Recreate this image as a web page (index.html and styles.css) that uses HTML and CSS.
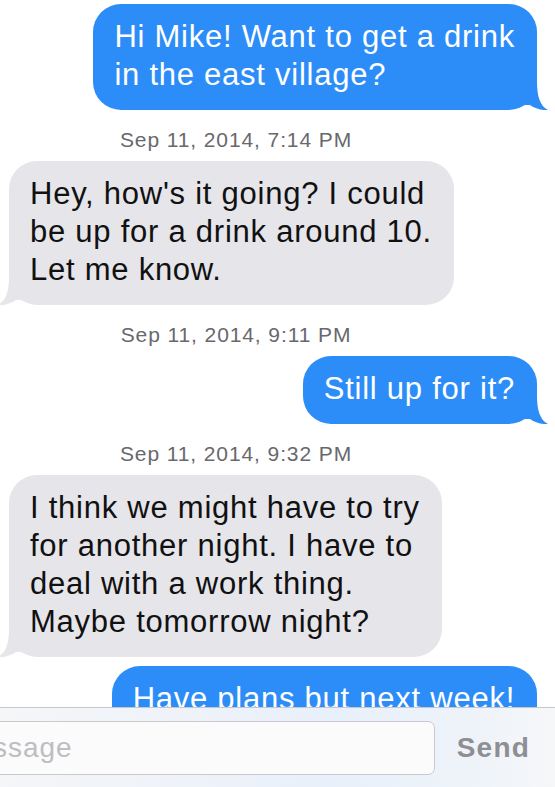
FILE: index.html
```html
<!DOCTYPE html>
<html lang="en">
<head>
<meta charset="utf-8">
<title>Messages</title>
<link rel="stylesheet" href="styles.css">
</head>
<body>
<div class="screen">
  <div class="thread">
    <div class="msg out">
      <p>Hi Mike! Want to get a drink<br>in the east village?</p>
      <svg class="tail" viewBox="0 0 31 28"><path d="M20 0 C20 14 23 24 31 28 C25 28.6 18 26.6 13 23 L0 23 L0 0 Z"/></svg>
    </div>
    <div class="stamp">Sep 11, 2014, 7:14 PM</div>
    <div class="msg in">
      <p>Hey, how's it going? I could<br>be up for a drink around 10.<br>Let me know.</p>
      <svg class="tail" viewBox="0 0 31 28"><path d="M20 0 C20 14 23 24 31 28 C25 28.6 18 26.6 13 23 L0 23 L0 0 Z"/></svg>
    </div>
    <div class="stamp">Sep 11, 2014, 9:11 PM</div>
    <div class="msg out">
      <p>Still up for it?</p>
      <svg class="tail" viewBox="0 0 31 28"><path d="M20 0 C20 14 23 24 31 28 C25 28.6 18 26.6 13 23 L0 23 L0 0 Z"/></svg>
    </div>
    <div class="stamp">Sep 11, 2014, 9:32 PM</div>
    <div class="msg in">
      <p>I think we might have to try<br>for another night. I have to<br>deal with a work thing.<br>Maybe tomorrow night?</p>
      <svg class="tail" viewBox="0 0 31 28"><path d="M20 0 C20 14 23 24 31 28 C25 28.6 18 26.6 13 23 L0 23 L0 0 Z"/></svg>
    </div>
    <div class="msg out">
      <p>Have plans but next week!</p>
    </div>
  </div>
  <div class="composer">
    <div class="field"><span class="placeholder">Message</span></div>
    <span class="send">Send</span>
  </div>
</div>
</body>
</html>
```
FILE: styles.css
```css
* { box-sizing: border-box; }
html, body { margin: 0; padding: 0; }
body {
  width: 555px;
  height: 787px;
  overflow: hidden;
  background: #ffffff;
  font-family: "Liberation Sans", Arial, sans-serif;
}
.screen {
  display: flex;
  flex-direction: column;
  height: 787px;
}
.thread {
  flex: 1;
  min-height: 0;
  overflow: hidden;
  display: flex;
  flex-direction: column;
  gap: 9px;
  padding: 4px 18px 0 9px;
}
.thread > * { flex-shrink: 0; }
.msg {
  position: relative;
  padding: 14px 22px 16px 21px;
  border-radius: 28px;
  font-size: 31px;
  line-height: 38px;
  letter-spacing: 0.75px;
  white-space: nowrap;
}
.msg p { margin: 0; }
.msg.out {
  align-self: flex-end;
  background: #2d8df8;
  color: #ffffff;
}
.msg.in {
  align-self: flex-start;
  background: #e5e5ea;
  color: #111111;
}
.tail {
  position: absolute;
  bottom: 0;
  width: 31px;
  height: 28px;
}
.out .tail { right: -11px; fill: #2d8df8; }
.in .tail { left: -11px; transform: scaleX(-1); fill: #e5e5ea; }
.stamp {
  margin-top: 9px;
  padding-right: 74px;
  text-align: center;
  font-size: 21px;
  line-height: 24px;
  letter-spacing: 0.9px;
  color: #68686d;
}
.composer {
  flex-shrink: 0;
  height: 80px;
  display: flex;
  align-items: flex-start;
  gap: 22px;
  padding: 13px 25px 0 0;
  border-top: 1px solid #c6c6cb;
  background: linear-gradient(90deg, #f5f6f8 0%, #eef2f9 35%, #e8f0fb 60%, #eef3f9 85%, #f6f7f9 100%);
}
.field {
  flex: 1;
  margin-left: -60px;
  height: 54px;
  display: flex;
  align-items: center;
  padding-left: 11px;
  border: 1px solid #c8c8cd;
  border-radius: 7px;
  background: #fbfbfc;
}
.placeholder {
  font-size: 28px;
  letter-spacing: 1px;
  color: #bdbdc2;
}
.send {
  font-size: 28px;
  line-height: 54px;
  font-weight: bold;
  letter-spacing: 1.2px;
  color: #8e8e93;
}
```
